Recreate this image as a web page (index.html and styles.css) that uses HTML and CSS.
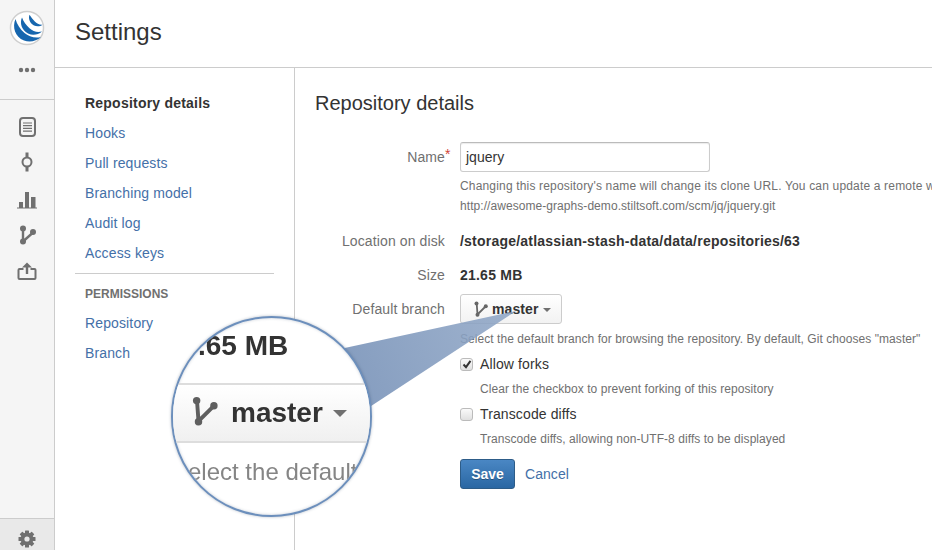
FILE: index.html
```html
<!DOCTYPE html>
<html lang="en">
<head>
<meta charset="utf-8">
<title>Settings</title>
<link rel="stylesheet" href="styles.css">
</head>
<body>
<div class="app">
  <aside class="rail">
    <div class="rail-top">
      <svg class="logo" width="36" height="36" viewBox="0 0 36 36">
        <circle cx="18" cy="18" r="16.500" fill="#fff" stroke="#cfcfcf" stroke-width="1.500"/>
        <path d="M6.500 9C3 17 6 27 15 30.500C21 33 27.500 31 32 27C26 28.500 19.500 26.500 15.500 23C11 19 8 14.500 6.500 9Z" fill="#1666ae"/>
        <path d="M13 7.500C10.500 13 12.500 20 19 23.500C23.500 25.700 29 25 33 21.500C28 22.700 24 21.300 20.500 18.200C17 15.300 14.500 11.500 13 7.500Z" fill="#1666ae"/>
        <path d="M20.500 4.800C19 8.800 21 13.500 25 15.500C28 16.900 31.300 16.400 33.500 14.700C30.500 15 27.800 13.800 25.800 11.600C23.800 9.600 22 7.200 20.500 4.800Z" fill="#1666ae"/>
      </svg>
      <svg class="more" width="20" height="6" viewBox="0 0 20 6"><g fill="#707070"><circle cx="4" cy="3" r="2.200"/><circle cx="10" cy="3" r="2.200"/><circle cx="16" cy="3" r="2.200"/></g></svg>
    </div>
    <nav class="rail-icons">
      <a class="rail-icon"><svg width="20" height="20" viewBox="0 0 20 20"><rect x="3" y="1" width="15" height="18" rx="3" fill="none" stroke="#707070" stroke-width="2"/><path d="M6 6h9M6 8.700h9M6 11.400h9M6 14.100h9" stroke="#707070" stroke-width="1.200"/></svg></a>
      <a class="rail-icon rail-commit"><svg width="20" height="20" viewBox="0 0 20 20"><path d="M10 0.500v5M10 14.500v5" stroke="#707070" stroke-width="3"/><circle cx="10" cy="10" r="4.500" fill="none" stroke="#707070" stroke-width="2"/></svg></a>
      <a class="rail-icon"><svg width="20" height="20" viewBox="0 0 20 20"><path d="M0 19h20" stroke="#707070" stroke-width="1"/><path d="M2 13h4v6H2zM8 3h4v16H8zM14 8h4.500v11H14z" fill="#707070"/></svg></a>
      <a class="rail-icon"><svg width="20" height="20" viewBox="0 0 20 20"><circle cx="6" cy="3.500" r="3" fill="#707070"/><circle cx="6" cy="16.500" r="3" fill="#707070"/><circle cx="16" cy="7" r="3" fill="#707070"/><path d="M6 4v12.500L15.500 8" fill="none" stroke="#707070" stroke-width="2.400"/></svg></a>
      <a class="rail-icon"><svg width="20" height="20" viewBox="0 0 20 20"><path d="M6.500 8H2.500a1 1 0 0 0-1 1V17a1 1 0 0 0 1 1h15a1 1 0 0 0 1-1V9a1 1 0 0 0-1-1h-4" fill="none" stroke="#707070" stroke-width="2"/><path d="M10 13V4" stroke="#707070" stroke-width="2.400"/><path d="M10 1.500l5 5H5z" fill="#707070"/></svg></a>
    </nav>
    <div class="rail-foot">
      <svg width="18" height="18" viewBox="0 0 18 18"><g fill="#707070"><rect x="7" y="0.500" width="4" height="17" rx=".6"/><rect x="7" y="0.500" width="4" height="17" rx=".6" transform="rotate(45 9 9)"/><rect x="7" y="0.500" width="4" height="17" rx=".6" transform="rotate(90 9 9)"/><rect x="7" y="0.500" width="4" height="17" rx=".6" transform="rotate(135 9 9)"/></g><circle cx="9" cy="9" r="5" fill="none" stroke="#707070" stroke-width="3"/><circle cx="9" cy="9" r="2.600" fill="#e9e9e9"/></svg>
    </div>
  </aside>
  <main class="main">
    <header class="page-head"><h1 class="page-title">Settings</h1></header>
    <div class="page-body">
      <nav class="side-nav">
        <a class="nav-item nav-current">Repository details</a>
        <a class="nav-item">Hooks</a>
        <a class="nav-item">Pull requests</a>
        <a class="nav-item">Branching model</a>
        <a class="nav-item">Audit log</a>
        <a class="nav-item">Access keys</a>
        <hr class="nav-sep">
        <div class="nav-head">PERMISSIONS</div>
        <a class="nav-item">Repository</a>
        <a class="nav-item">Branch</a>
      </nav>
      <section class="content">
        <h2 class="content-title">Repository details</h2>
        <form class="form">
          <div class="row">
            <label class="label">Name<span class="req">*</span></label>
            <div class="value">
              <div class="text-input">jquery</div>
              <p class="help help-first">Changing this repository's name will change its clone URL. You can update a remote with the following URL:</p>
              <p class="help">http://awesome-graphs-demo.stiltsoft.com/scm/jq/jquery.git</p>
            </div>
          </div>
          <div class="row row-location">
            <label class="label">Location on disk</label>
            <div class="value strong">/storage/atlassian-stash-data/data/repositories/63</div>
          </div>
          <div class="row row-size">
            <label class="label">Size</label>
            <div class="value strong">21.65 MB</div>
          </div>
          <div class="row row-branch">
            <label class="label label-branch">Default branch</label>
            <div class="value">
              <div class="branch-btn">
                <svg width="14" height="16" viewBox="0 0 14 16"><circle cx="2.500" cy="2.400" r="2" fill="#666"/><circle cx="3.500" cy="13.800" r="2" fill="#666"/><circle cx="11.800" cy="5.200" r="2" fill="#666"/><path d="M2.700 2.500L3.500 13.500L11.500 5.500" fill="none" stroke="#666" stroke-width="1.800"/></svg>
                <span class="branch-name">master</span>
                <span class="caret"></span>
              </div>
              <p class="help help-first-b">Select the default branch for browsing the repository. By default, Git chooses "master"</p>
              <div class="check-line">
                <span class="check"><svg width="10" height="10" viewBox="0 0 10 10"><path d="M1.500 5.500L4 8.200L8.500 1.800" fill="none" stroke="#333" stroke-width="2"/></svg></span>
                <span>Allow forks</span>
              </div>
              <p class="help help-indent">Clear the checkbox to prevent forking of this repository</p>
              <div class="check-line">
                <span class="check"></span>
                <span>Transcode diffs</span>
              </div>
              <p class="help help-indent">Transcode diffs, allowing non-UTF-8 diffs to be displayed</p>
              <div class="actions">
                <span class="btn-save">Save</span>
                <a class="cancel">Cancel</a>
              </div>
            </div>
          </div>
        </form>
      </section>
    </div>
  </main>
</div>

<svg class="beam" width="932" height="550" viewBox="0 0 932 550">
  <defs>
    <linearGradient id="beamfill" x1="350" y1="380" x2="516" y2="312" gradientUnits="userSpaceOnUse">
      <stop offset="0" stop-color="#7f98bc" stop-opacity=".95"/>
      <stop offset="1" stop-color="#8ea5c5" stop-opacity=".85"/>
    </linearGradient>
  </defs>
  <polygon points="340,349 516,311 365,410" fill="url(#beamfill)"/>
</svg>
<div class="lens">
  <span class="lens-size">.65 MB</span>
  <div class="lens-btn">
    <svg class="lens-icon" width="26" height="30" viewBox="0 0 14 16"><circle cx="2.500" cy="2.400" r="2" fill="#5f5f5f"/><circle cx="3.500" cy="13.800" r="2" fill="#5f5f5f"/><circle cx="11.800" cy="5.200" r="2" fill="#5f5f5f"/><path d="M2.700 2.500L3.500 13.500L11.500 5.500" fill="none" stroke="#5f5f5f" stroke-width="2.100"/></svg>
    <span class="lens-master">master</span>
    <span class="lens-caret"></span>
  </div>
  <span class="lens-help">Select the default</span>
</div>
</body>
</html>
```
FILE: styles.css
```css
html, body {
  margin: 0;
  padding: 0;
  height: 550px;
  overflow: hidden;
  background: #fff;
}
body {
  position: relative;
  font-family: "Liberation Sans", Arial, sans-serif;
  font-size: 14px;
  color: #333;
}
.app { display: flex; height: 550px; }

/* left rail */
.rail {
  width: 54px;
  flex: none;
  display: flex;
  flex-direction: column;
  background: #f5f5f5;
  border-right: 1px solid #ccc;
}
.rail-top {
  box-sizing: border-box;
  height: 100px;
  border-bottom: 1px solid #ccc;
  display: flex;
  flex-direction: column;
  align-items: center;
  padding-top: 10px;
}
.logo { display: block; }
.more { display: block; margin-top: 21px; }
.rail-icons {
  display: flex;
  flex-direction: column;
  align-items: center;
  padding-top: 9px;
}
.rail-icon {
  height: 36px;
  display: flex;
  align-items: center;
  justify-content: center;
}
.rail-commit { height: 34px; margin-bottom: 2px; }
.rail-foot {
  box-sizing: border-box;
  margin-top: auto;
  height: 32px;
  padding-top: 11px;
  background: #e9e9e9;
  border-top: 1px solid #ccc;
  display: flex;
  align-items: flex-start;
  justify-content: center;
}

/* main */
.main { flex: 1; min-width: 0; display: flex; flex-direction: column; }
.page-head {
  height: 67px;
  border-bottom: 1px solid #ccc;
  padding-left: 20px;
  display: flex;
  align-items: center;
}
.page-title {
  margin: 0 0 3px;
  font-size: 24px;
  font-weight: 400;
  color: #333;
}
.page-body { flex: 1; display: flex; min-height: 0; }

/* settings nav */
.side-nav {
  width: 189px;
  flex: none;
  padding: 20px 20px 0 30px;
  border-right: 1px solid #ccc;
}
.nav-item {
  display: block;
  line-height: 30px;
  height: 30px;
  color: #4470a8;
  white-space: nowrap;
  letter-spacing: .13px;
}
.nav-current { color: #333; font-weight: 700; letter-spacing: .22px; }
.nav-sep {
  margin: 5px 0 5px -10px;
  border: 0;
  border-top: 1px solid #ccc;
}
.nav-head {
  line-height: 30px;
  height: 29px;
  font-size: 12px;
  font-weight: 700;
  color: #707070;
}

/* content */
.content { flex: 1; min-width: 0; padding: 0 0 0 20px; overflow: hidden; }
.content-title {
  margin: 24px 0 0;
  height: 50px;
  line-height: 22px;
  font-size: 20px;
  font-weight: 400;
  color: #333;
}
.row { display: flex; column-gap: 15px; }
.label {
  width: 130px;
  flex: none;
  text-align: right;
  line-height: 20px;
  color: #707070;
  white-space: nowrap;
  letter-spacing: .12px;
}
.row:first-child .label { line-height: 30px; position: relative; }
.req {
  position: absolute;
  color: #d04437;
  font-size: 14px;
  line-height: 20px;
  top: 2px;
}
.label-branch { line-height: 30px; }
.value { min-width: 0; flex: 1; white-space: nowrap; }
.strong { font-weight: 700; line-height: 20px; color: #333; letter-spacing: .22px; }
.row-location { margin-top: 15px; }
.row-size { margin-top: 14px; }
.row-branch { margin-top: 9px; }

.text-input {
  width: 250px;
  height: 30px;
  box-sizing: border-box;
  border: 1px solid #ccc;
  border-top-color: #bbb;
  border-radius: 3px;
  box-shadow: inset 0 1px 1px rgba(0,0,0,.08);
  padding: 0 5px;
  line-height: 28px;
  font-size: 14px;
  color: #333;
}
.help {
  margin: 0;
  font-size: 12px;
  line-height: 20px;
  color: #707070;
  letter-spacing: .06px;
}
.help-first { margin-top: 4px; letter-spacing: .17px; }
.help-first-b { margin-top: 5px; }
.help-indent { margin-top: 5px; padding-left: 20px; }

.branch-btn {
  display: inline-flex;
  box-sizing: border-box;
  align-items: center;
  width: 102px;
  height: 30px;
  vertical-align: top;
  padding-left: 13px;
  border: 1px solid #ccc;
  border-radius: 3px;
  background: linear-gradient(#fff, #f2f2f2);
  font-weight: 700;
  color: #333;
}
.branch-name { margin-left: 4px; letter-spacing: .1px; }
.caret {
  width: 0; height: 0;
  margin-left: 4px;
  margin-top: 2px;
  border: 4px solid transparent;
  border-top-color: #707070;
  border-bottom: 0;
}
.check-line {
  display: flex;
  align-items: center;
  height: 20px;
  margin-top: 5px;
  color: #333;
  letter-spacing: .12px;
}
.check {
  width: 11px;
  height: 11px;
  flex: none;
  margin-right: 7px;
  border: 1px solid #bbb;
  border-radius: 3px;
  background: linear-gradient(#fafafa, #e0e0e0);
  display: flex;
  align-items: center;
  justify-content: center;
}
.actions { display: flex; align-items: center; margin-top: 10px; }
.btn-save {
  width: 55px;
  height: 30px;
  box-sizing: border-box;
  border: 1px solid #2d5c88;
  border-radius: 3px;
  background: linear-gradient(#4a87c4, #2a67a3);
  color: #fff;
  font-weight: 700;
  text-align: center;
  line-height: 28px;
  text-shadow: 0 1px 0 rgba(0,0,0,.3);
}
.cancel { margin-left: 10px; color: #4470a8; letter-spacing: .05px; }

/* magnifier overlay */
.beam { position: absolute; left: 0; top: 0; pointer-events: none; }
.lens {
  position: absolute;
  left: 171px;
  top: 316px;
  width: 197px;
  height: 197px;
  border: 2px solid #6c8fbc;
  border-radius: 50%;
  background: #fff;
  overflow: hidden;
  box-shadow: 0 0 3px rgba(60,80,110,.4), inset 0 0 3px rgba(60,80,110,.3);
  white-space: nowrap;
}
.lens-size, .lens-help, .lens-master { filter: blur(.5px); }
.lens-size {
  position: absolute;
  left: 25px;
  top: 12px;
  font-size: 28px;
  line-height: 32px;
  font-weight: 700;
  color: #333;
}
.lens-btn {
  position: absolute;
  left: -10px;
  right: -10px;
  top: 65px;
  height: 60px;
  box-sizing: border-box;
  border-top: 2px solid #ddd;
  border-bottom: 2px solid #ddd;
  background: linear-gradient(#fff, #f0f0f0);
}
.lens-icon { position: absolute; left: 29px; top: 11px; filter: blur(.6px); }
.lens-master {
  position: absolute;
  left: 68px;
  top: 12px;
  font-size: 28px;
  line-height: 32px;
  font-weight: 700;
  color: #333;
}
.lens-caret {
  position: absolute;
  left: 170px;
  top: 25px;
  width: 0; height: 0;
  border: 7px solid transparent;
  border-top-color: #707070;
  border-bottom: 0;
  filter: blur(.5px);
}
.lens-help {
  position: absolute;
  left: -1px;
  top: 138px;
  font-size: 24px;
  line-height: 32px;
  color: #858585;
}
```
